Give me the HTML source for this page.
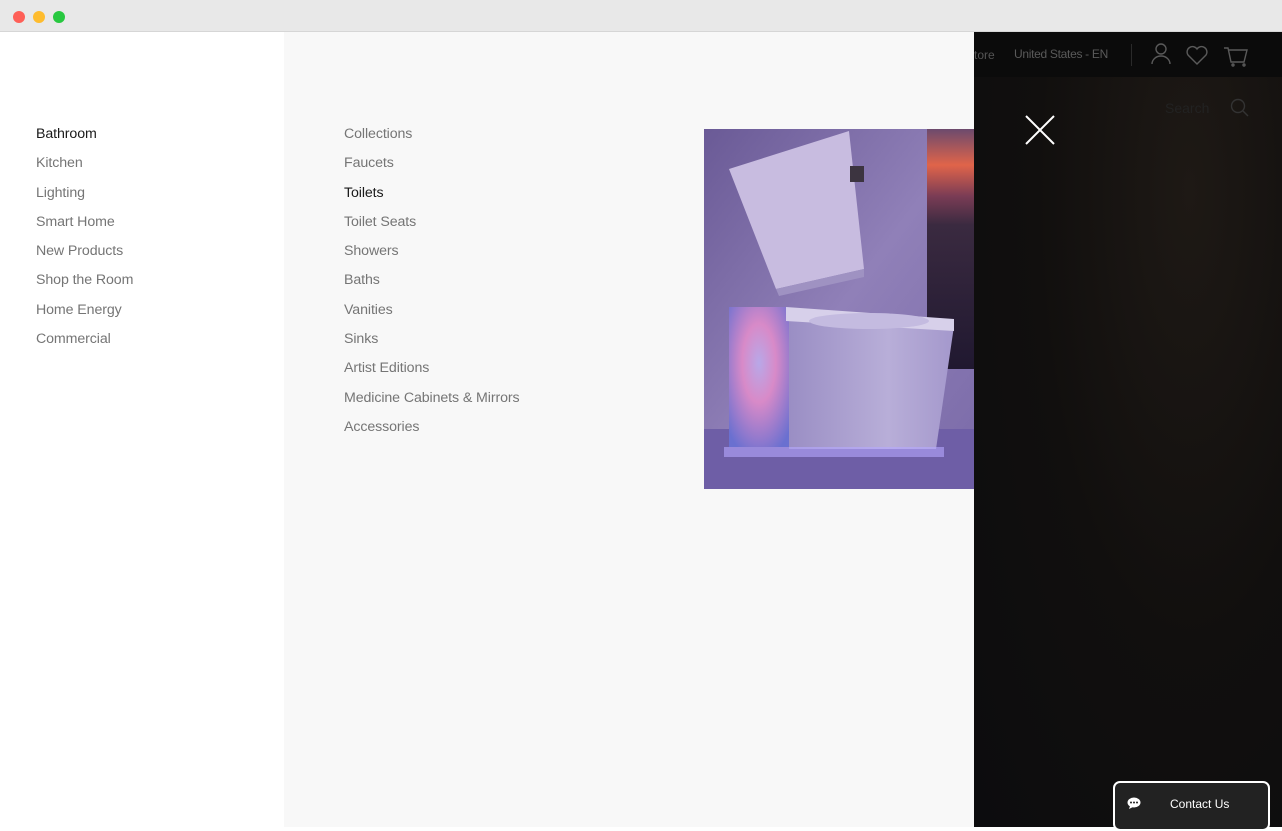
<!DOCTYPE html>
<html><head><style>
*{margin:0;padding:0;box-sizing:border-box}
body{width:1282px;height:827px;overflow:hidden;font-family:"Liberation Sans",sans-serif;background:#fff;position:relative}
.bar{position:absolute;left:0;top:0;width:1282px;height:32px;background:#e8e8e8;border-bottom:1px solid #d6d6d6}
.dot{position:absolute;top:11px;width:12px;height:12px;border-radius:50%}
.left{position:absolute;left:0;top:32px;width:284px;height:795px;background:#fff}
.mid{position:absolute;left:284px;top:32px;width:690px;height:795px;background:#f8f8f8}
.right{position:absolute;left:974px;top:32px;width:308px;height:795px;background:radial-gradient(ellipse at 70% 20%,#1e1915 0%,#110f0e 50%,#0c0c0e 100%)}
.nav{position:absolute;font-size:14.2px;color:#757575;line-height:29.3px;letter-spacing:-0.1px}
.nav div{height:29.3px}
.nav .a{color:#1a1a1a}
</style></head><body>
<div class="bar"><div class="dot" style="left:13px;background:#fe5f57"></div><div class="dot" style="left:33px;background:#febc2e"></div><div class="dot" style="left:53px;background:#28c840"></div></div>
<div class="left"><div class="nav" style="left:36px;top:88px">
<div class="a">Bathroom</div><div>Kitchen</div><div>Lighting</div><div>Smart Home</div><div>New Products</div><div>Shop the Room</div><div>Home Energy</div><div>Commercial</div></div></div>
<div class="mid"><div class="nav" style="left:60px;top:88px">
<div>Collections</div><div>Faucets</div><div class="a">Toilets</div><div>Toilet Seats</div><div>Showers</div><div>Baths</div><div>Vanities</div><div>Sinks</div><div>Artist Editions</div><div>Medicine Cabinets &amp; Mirrors</div><div>Accessories</div></div>
<svg style="position:absolute;left:420px;top:97px" width="270" height="360" viewBox="0 0 270 360">
<defs>
<linearGradient id="sky" x1="0" y1="0" x2="0" y2="1"><stop offset="0" stop-color="#6c4a6e"/><stop offset=".15" stop-color="#e0644a"/><stop offset=".28" stop-color="#7a3c55"/><stop offset=".4" stop-color="#3a2a40"/><stop offset="1" stop-color="#201830"/></linearGradient>
<radialGradient id="glow" cx=".5" cy=".4" r=".7"><stop offset="0" stop-color="#b8a8e8"/><stop offset=".4" stop-color="#d88ac8"/><stop offset="1" stop-color="#6a70d0"/></radialGradient>
<linearGradient id="wall" x1="0" y1="0" x2="1" y2="1"><stop offset="0" stop-color="#6a5a96"/><stop offset=".5" stop-color="#9080b8"/><stop offset="1" stop-color="#7a6aa8"/></linearGradient>
<linearGradient id="bowl" x1="0" y1="0" x2="1" y2="0"><stop offset="0" stop-color="#9a8ec4"/><stop offset=".6" stop-color="#b8aed8"/><stop offset="1" stop-color="#a498cc"/></linearGradient>
</defs>
<rect width="270" height="360" fill="url(#wall)"/>
<rect x="223" y="0" width="47" height="240" fill="url(#sky)"/>
<rect x="0" y="300" width="270" height="60" fill="#6e5ea6"/>
<polygon points="25,40 145,2 160,140 72,160" fill="#c8bce0"/>
<polygon points="72,160 160,140 160,148 75,167" fill="#9f92c2"/>
<rect x="146" y="37" width="14" height="16" fill="#3c3440"/>
<rect x="25" y="178" width="60" height="140" fill="url(#glow)"/>
<polygon points="85,185 250,197 232,320 85,320" fill="url(#bowl)"/>
<polygon points="82,178 250,190 250,202 82,192" fill="#d7d0ea"/>
<ellipse cx="165" cy="192" rx="60" ry="8" fill="#c4bbe0"/>
<rect x="20" y="318" width="220" height="10" fill="#b6a8ff" opacity=".6"/>
</svg>
</div>
<div class="right">
<div style="position:absolute;left:0;top:0;width:308px;height:45px;background:#0b0b0b"></div>
<div style="position:absolute;left:0;top:16px;font-size:12px;color:#555">tore</div>
<div style="position:absolute;left:40px;top:15px;font-size:12px;color:#5a5a5a;letter-spacing:-0.3px">United States - EN</div>
<div style="position:absolute;left:157px;top:12px;width:1px;height:22px;background:#2a2a2a"></div>
<svg style="position:absolute;left:176px;top:10px" width="110" height="26" fill="none" stroke="#5a5a5a" stroke-width="1.4">
<circle cx="11" cy="7" r="5"/><path d="M2 22 a9 8 0 0 1 18 0"/>
<path d="M47 22 L38 13 a5 5 0 0 1 9 -6 a5 5 0 0 1 9 6 Z"/>
<path d="M74 6 h4 l3 14 h13 l3 -12 h-18"/><circle cx="83" cy="23" r="1"/><circle cx="94" cy="23" r="1"/>
</svg>
<div style="position:absolute;left:191px;top:68px;font-size:14px;color:#222">Search</div>
<svg style="position:absolute;left:256px;top:66px" width="20" height="20" fill="none" stroke="#333" stroke-width="1.4"><circle cx="8" cy="8" r="6.5"/><path d="M13 13 l5 5"/></svg>
<svg style="position:absolute;left:50px;top:82px" width="32" height="32" stroke="#fff" stroke-width="2"><path d="M2 2 L30 30 M30 2 L2 30"/></svg>
</div>
<div style="position:absolute;left:1113px;top:781px;width:157px;height:50px;background:#222;border:2px solid #fff;border-radius:7px;color:#fff;font-size:12px">
<svg style="position:absolute;left:12px;top:14px" width="14" height="12"><ellipse cx="7" cy="5.5" rx="6.5" ry="5" fill="#fff"/><path d="M3 9 L2 12 L6 10z" fill="#fff"/><circle cx="4" cy="5.5" r="1" fill="#222"/><circle cx="7" cy="5.5" r="1" fill="#222"/><circle cx="10" cy="5.5" r="1" fill="#222"/></svg>
<div style="position:absolute;left:55px;top:14px">Contact Us</div></div>
</body></html>
